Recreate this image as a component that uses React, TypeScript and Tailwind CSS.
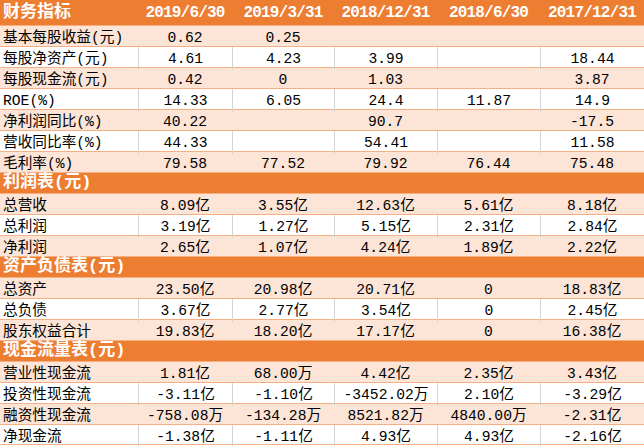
/**
 * App.tsx — 财务指标 spreadsheet snapshot (Excel-style table, orange theme).
 */

type Row =
  | { kind: "data"; label: string; values: string[] }
  | { kind: "section"; label: string };

const DATES = ["2019/6/30", "2019/3/31", "2018/12/31", "2018/6/30", "2017/12/31"];

const ROWS: Row[] = [
  { kind: "data", label: "基本每股收益(元)", values: ["0.62", "0.25", "", "", ""] },
  { kind: "data", label: "每股净资产(元)", values: ["4.61", "4.23", "3.99", "", "18.44"] },
  { kind: "data", label: "每股现金流(元)", values: ["0.42", "0", "1.03", "", "3.87"] },
  { kind: "data", label: "ROE(%)", values: ["14.33", "6.05", "24.4", "11.87", "14.9"] },
  { kind: "data", label: "净利润同比(%)", values: ["40.22", "", "90.7", "", "-17.5"] },
  { kind: "data", label: "营收同比率(%)", values: ["44.33", "", "54.41", "", "11.58"] },
  { kind: "data", label: "毛利率(%)", values: ["79.58", "77.52", "79.92", "76.44", "75.48"] },
  { kind: "section", label: "利润表(元)" },
  { kind: "data", label: "总营收", values: ["8.09亿", "3.55亿", "12.63亿", "5.61亿", "8.18亿"] },
  { kind: "data", label: "总利润", values: ["3.19亿", "1.27亿", "5.15亿", "2.31亿", "2.84亿"] },
  { kind: "data", label: "净利润", values: ["2.65亿", "1.07亿", "4.24亿", "1.89亿", "2.22亿"] },
  { kind: "section", label: "资产负债表(元)" },
  { kind: "data", label: "总资产", values: ["23.50亿", "20.98亿", "20.71亿", "0", "18.83亿"] },
  { kind: "data", label: "总负债", values: ["3.67亿", "2.77亿", "3.54亿", "0", "2.45亿"] },
  { kind: "data", label: "股东权益合计", values: ["19.83亿", "18.20亿", "17.17亿", "0", "16.38亿"] },
  { kind: "section", label: "现金流量表(元)" },
  { kind: "data", label: "营业性现金流", values: ["1.81亿", "68.00万", "4.42亿", "2.35亿", "3.43亿"] },
  { kind: "data", label: "投资性现金流", values: ["-3.11亿", "-1.10亿", "-3452.02万", "2.10亿", "-3.29亿"] },
  { kind: "data", label: "融资性现金流", values: ["-758.08万", "-134.28万", "8521.82万", "4840.00万", "-2.31亿"] },
  { kind: "data", label: "净现金流", values: ["-1.38亿", "-1.11亿", "4.93亿", "4.93亿", "-2.16亿"] },
];

const COLS = "grid grid-cols-[138px_94px_102px_103px_103px_104px]";

export default function App() {
  // stripe restarts at every section: first row peach, then white, ...
  let stripe = 0;

  return (
    <div
      className="w-[644px] h-[446px] overflow-hidden bg-white text-black"
      style={{ fontFamily: '"Liberation Mono", "Noto Sans CJK SC", monospace' }}
    >
      {/* Header */}
      <div className={`${COLS} h-[25px] bg-[#ed7d31] font-bold text-white`}>
        <div className="flex items-center pl-[3px] text-[17px]">财务指标</div>
        {DATES.map((d) => (
          <div
            key={d}
            className="flex items-center justify-center pt-[1px] text-[16px] tracking-[-0.8px]"
          >
            {d}
          </div>
        ))}
      </div>

      {ROWS.map((row, i) => {
        const last = i === ROWS.length - 1 ? "border-b" : "";
        if (row.kind === "section") {
          stripe = 0;
          return (
            <div
              key={row.label}
              className={`flex h-[21px] items-center border-t border-[#f4b084] bg-[#ed7d31] pl-[3px] text-[17px] font-bold text-white ${last}`}
            >
              {row.label}
            </div>
          );
        }
        const peach = stripe % 2 === 0;
        stripe++;
        return (
          <div
            key={row.label}
            className={`${COLS} h-[21px] border-t border-[#f4b084] text-[14.67px] ${
              peach ? "bg-[#fce4d6]" : "bg-white"
            } ${last}`}
          >
            <div className="flex items-center whitespace-nowrap pl-[3px] pt-[1px]">{row.label}</div>
            {row.values.map((v, j) => (
              <div
                key={j}
                className={`flex items-center justify-center whitespace-nowrap pt-[1px] ${
                  peach ? "" : "border-l border-[#d4d4d4]"
                }`}
              >
                {v}
              </div>
            ))}
          </div>
        );
      })}
    </div>
  );
}
